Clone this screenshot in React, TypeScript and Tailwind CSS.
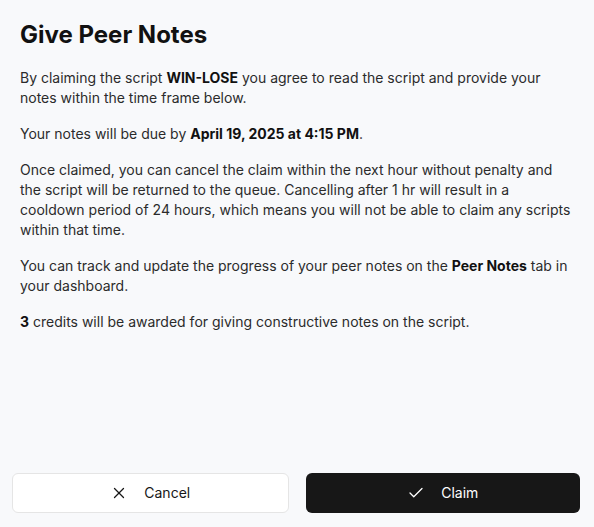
import { Check, X } from "lucide-react";

export default function App() {
  return (
    <div
      className="flex h-[527px] w-[594px] flex-col bg-[#f8f9fb] text-[#2b2b2b]"
      style={{ fontFamily: "Inter, 'Liberation Sans', sans-serif" }}
    >
      <div className="flex-1 px-5 pt-[19px]">
        <h1 className="mb-[17px] text-2xl font-bold text-[#111111]">Give Peer Notes</h1>
        <div className="flex flex-col gap-4 text-sm leading-5">
          <p>
            By claiming the script <strong className="font-bold text-[#111111]">WIN-LOSE</strong> you agree to read the
            script and provide your notes within the time frame below.
          </p>
          <p>
            Your notes will be due by{" "}
            <strong className="font-bold text-[#111111]">April 19, 2025 at 4:15 PM</strong>.
          </p>
          <p>
            Once claimed, you can cancel the claim within the next hour without penalty and the script will be
            returned to the queue. Cancelling after 1 hr will result in a cooldown period of 24 hours, which means
            you will not be able to claim any scripts within that time.
          </p>
          <p>
            You can track and update the progress of your peer notes on the{" "}
            <strong className="font-bold text-[#111111]">Peer Notes</strong> tab in your dashboard.
          </p>
          <p>
            <strong className="font-bold text-[#111111]">3</strong> credits will be awarded for giving constructive
            notes on the script.
          </p>
        </div>
      </div>

      <div className="flex gap-[17px] pb-[14px] pl-3 pr-[14px]">
        <button className="flex h-10 flex-1 items-center justify-center gap-4 rounded-md border border-[#e5e5e5] bg-white text-sm text-[#171717]">
          <X size={18} strokeWidth={1.75} />
          Cancel
        </button>
        <button className="flex h-10 flex-1 items-center justify-center gap-4 rounded-md bg-[#171717] text-sm text-white">
          <Check size={18} strokeWidth={1.75} />
          Claim
        </button>
      </div>
    </div>
  );
}
